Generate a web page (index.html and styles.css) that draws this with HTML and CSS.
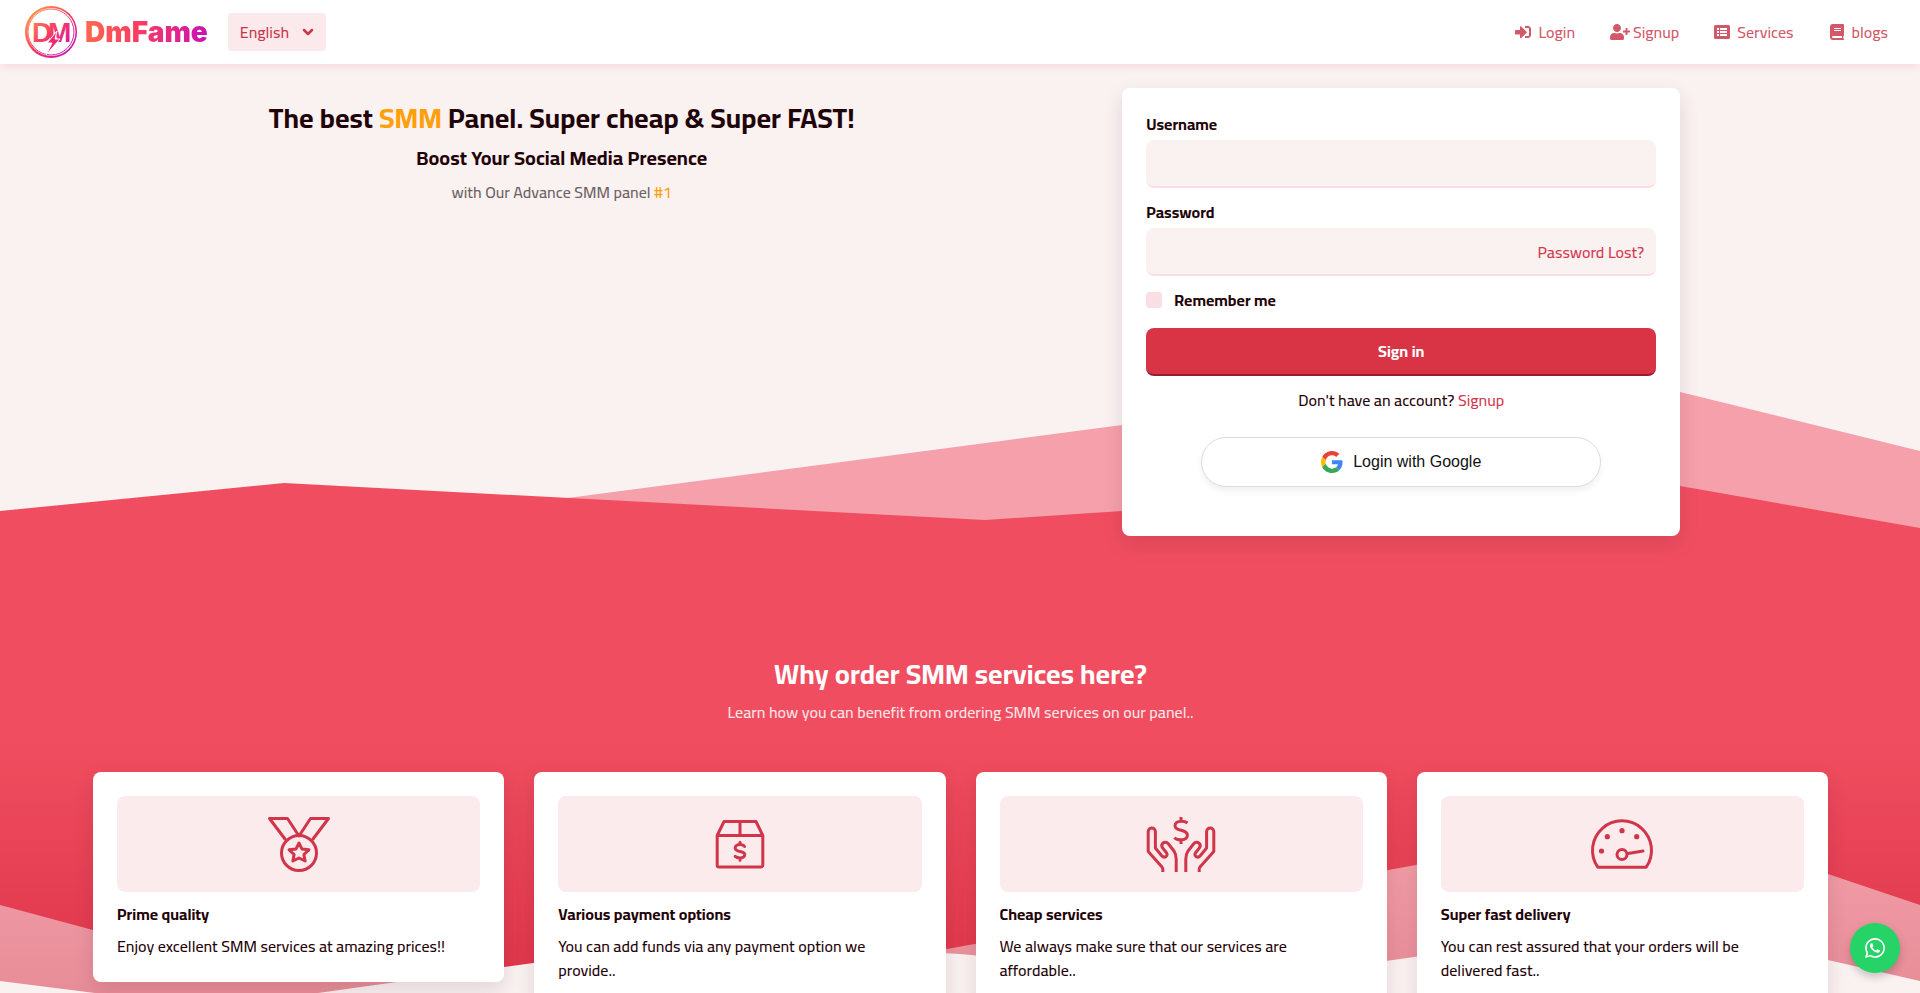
FILE: index.html
```html
<!DOCTYPE html>
<html lang="en">
<head>
    <meta charset="UTF-8">
    <meta name="viewport" content="width=device-width, initial-scale=1.0">
    <title>DmFame</title>
    <link rel="stylesheet" href="styles.css">
</head>
<body>
    <header class="navbar">
        <a class="brand" href="#">
            <svg class="brand-mark" viewBox="0 0 54 54" aria-hidden="true">
                <defs>
                    <linearGradient id="brand-gradient" gradientUnits="userSpaceOnUse" x1="6" y1="6" x2="48" y2="48">
                        <stop offset="0" stop-color="#ff9a4a"/>
                        <stop offset="0.5" stop-color="#fb3a62"/>
                        <stop offset="1" stop-color="#c411b8"/>
                    </linearGradient>
                </defs>
                <path fill="url(#brand-gradient)" fill-rule="evenodd" d="M27 1a26 26 0 1 0 0 52a26 26 0 1 0 0-52zM27.500 3a24 24 0 1 1 0 48a24 24 0 1 1 0-48z"/>
                <circle cx="27" cy="27" r="23" fill="none" stroke="url(#brand-gradient)" stroke-width="1"/>
                <path d="M2 32a25 25 0 0 1 14-28a28 28 0 0 0-14 28zM52 22a25 25 0 0 1-14 28a28 28 0 0 0 14-28z" fill="url(#brand-gradient)"/>
                <text class="brand-initials" y="37" fill="url(#brand-gradient)"><tspan x="8">D</tspan><tspan x="24">M</tspan></text>
                <path d="M33 26L23 38h5l-6 12 14-16h-5z" fill="#ee2c70" stroke="#fff" stroke-width="1"/>
            </svg>
            <span class="brand-name">DmFame</span>
        </a>
        <div class="language">
            <select class="language-select" aria-label="Language">
                <option>English</option>
            </select>
            <svg class="language-arrow" viewBox="0 0 12 12" aria-hidden="true"><path d="M2 4l4 4 4-4"/></svg>
        </div>
        <nav class="menu">
            <a class="menu-link" href="#">
                <svg class="menu-icon" viewBox="0 0 512 512" aria-hidden="true"><path d="M416 448h-84c-6.6 0-12-5.4-12-12v-40c0-6.6 5.4-12 12-12h84c17.7 0 32-14.3 32-32V160c0-17.7-14.3-32-32-32h-84c-6.6 0-12-5.4-12-12V76c0-6.6 5.4-12 12-12h84c53 0 96 43 96 96v192c0 53-43 96-96 96zm-47-201L201 79c-15-15-41-4.500-41 17v96H24c-13.300 0-24 10.700-24 24v96c0 13.300 10.700 24 24 24h136v96c0 21.500 26 32 41 17l168-168c9.300-9.400 9.300-24.600 0-34z"/></svg>
                Login
            </a>
            <a class="menu-link menu-link-tight" href="#">
                <svg class="menu-icon menu-icon-wide" viewBox="0 0 640 512" aria-hidden="true"><path d="M624 208h-64v-64c0-8.800-7.200-16-16-16h-32c-8.800 0-16 7.200-16 16v64h-64c-8.800 0-16 7.200-16 16v32c0 8.800 7.200 16 16 16h64v64c0 8.800 7.200 16 16 16h32c8.800 0 16-7.200 16-16v-64h64c8.800 0 16-7.200 16-16v-32c0-8.800-7.200-16-16-16zm-400 48c70.700 0 128-57.300 128-128S294.700 0 224 0 96 57.300 96 128s57.300 128 128 128zm89.600 32h-16.700c-22.200 10.200-46.900 16-72.900 16s-50.600-5.800-72.900-16h-16.700C60.200 288 0 348.200 0 422.400V464c0 26.500 21.500 48 48 48h352c26.500 0 48-21.500 48-48v-41.600c0-74.200-60.200-134.400-134.400-134.400z"/></svg>
                Signup
            </a>
            <a class="menu-link" href="#">
                <svg class="menu-icon" viewBox="0 0 16 16" aria-hidden="true"><path fill-rule="evenodd" d="M1.500 1h13A1.500 1.500 0 0 1 16 2.500v11a1.500 1.500 0 0 1-1.500 1.500h-13A1.500 1.500 0 0 1 0 13.500v-11A1.500 1.500 0 0 1 1.500 1zM3 4v2h2V4zM6 4v2h7V4zM3 7v2h2V7zM6 7v2h7V7zM3 10v2h2v-2zM6 10v2h7v-2z"/></svg>
                Services
            </a>
            <a class="menu-link" href="#">
                <svg class="menu-icon" viewBox="0 0 16 16" aria-hidden="true"><path fill-rule="evenodd" d="M4 0h10a1 1 0 0 1 1 1v10.500l-.7.800v2l.7.700v1H4a3 3 0 0 1-3-3V3a3 3 0 0 1 3-3zM5 4v1h7V4zM5 6v1h7V6zM4 12a1 1 0 0 0 0 2h9v-2z"/></svg>
                blogs
            </a>
        </nav>
    </header>

    <main class="page">
        <svg class="backdrop" viewBox="0 0 1920 976" preserveAspectRatio="none" aria-hidden="true">
            <defs>
                <linearGradient id="red-fade" gradientUnits="userSpaceOnUse" x1="0" y1="676" x2="0" y2="916">
                    <stop offset="0" stop-color="#f04e60"/>
                    <stop offset="1" stop-color="#df364b"/>
                </linearGradient>
                <linearGradient id="pink-fade" gradientUnits="userSpaceOnUse" x1="0" y1="786" x2="0" y2="936">
                    <stop offset="0" stop-color="#f29da7"/>
                    <stop offset="1" stop-color="#e68c97"/>
                </linearGradient>
            </defs>
            <polygon fill="#f5a0aa" points="560,435 1122,361 1573,302 1680,328 1920,387 1920,500 560,500"/>
            <polygon fill="url(#red-fade)" points="0,447 284,419 985,456 1122,447 1633,414 1680,422 1920,464 1920,976 0,976"/>
            <polygon fill="url(#pink-fade)" points="0,841 93,866 450,916 880,897 1416,801 1640,761 1828,810 1920,841 1920,976 0,976"/>
            <polygon fill="#faf1f1" points="0,917 95,929 200,945 318,929 504,903 700,876 960,890 1250,916 1400,895 1663,858 1828,896 1920,917 1920,976 0,976"/>
        </svg>

        <div class="content">
            <section class="hero">
                <div class="intro">
                    <h1 class="intro-title">The best <span class="accent">SMM</span> Panel. Super cheap &amp; Super FAST!</h1>
                    <h2 class="intro-subtitle">Boost Your Social Media Presence</h2>
                    <p class="intro-text">with Our Advance SMM panel <span class="accent">#1</span></p>
                </div>

                <form class="login-card">
                    <div class="field">
                        <label class="field-label" for="username">Username</label>
                        <input class="field-input" type="text" id="username" name="username">
                    </div>
                    <div class="field">
                        <label class="field-label" for="password">Password</label>
                        <div class="password-box">
                            <input class="field-input" type="password" id="password" name="password">
                            <a class="password-lost" href="#">Password Lost?</a>
                        </div>
                    </div>
                    <div class="remember">
                        <input class="remember-box" type="checkbox" id="remember" name="remember">
                        <label class="field-label" for="remember">Remember me</label>
                    </div>
                    <button class="signin-button" type="submit">Sign in</button>
                    <p class="signup-text">Don't have an account? <a class="signup-link" href="#">Signup</a></p>
                    <button class="google-button" type="button">
                        <svg class="google-icon" viewBox="0 0 48 48" aria-hidden="true">
                            <path fill="#EA4335" d="M24 9.500c3.540 0 6.710 1.220 9.210 3.600l6.850-6.850C35.900 2.380 30.470 0 24 0 14.620 0 6.510 5.380 2.560 13.220l7.980 6.190C12.430 13.720 17.740 9.500 24 9.500z"/>
                            <path fill="#4285F4" d="M46.980 24.550c0-1.570-.15-3.090-.38-4.550H24v9.020h12.940c-.58 2.960-2.260 5.480-4.780 7.180l7.730 6c4.510-4.180 7.090-10.360 7.090-17.650z"/>
                            <path fill="#FBBC05" d="M10.530 28.590c-.48-1.450-.76-2.990-.76-4.590s.27-3.140.76-4.590l-7.980-6.190C.92 16.460 0 20.120 0 24c0 3.880.92 7.540 2.560 10.780l7.970-6.190z"/>
                            <path fill="#34A853" d="M24 48c6.480 0 11.930-2.130 15.890-5.810l-7.730-6c-2.150 1.450-4.920 2.300-8.160 2.300-6.260 0-11.570-4.220-13.470-9.910l-7.980 6.190C6.510 42.620 14.620 48 24 48z"/>
                        </svg>
                        Login with Google
                    </button>
                </form>
            </section>

            <section class="benefits">
                <h2 class="benefits-title">Why order SMM services here?</h2>
                <p class="benefits-text">Learn how you can benefit from ordering SMM services on our panel..</p>

                <div class="benefit-list">
                    <article class="benefit">
                        <div class="benefit-picture">
                            <svg class="benefit-icon" viewBox="0 0 72 64" aria-hidden="true">
                                <path d="M22 27L6.500 6.500H24.500L36 24 47.500 6.500H65.500L50 27"/>
                                <circle cx="36" cy="41" r="17.500"/>
                                <path d="M36 31l2.900 5.900 7 .9-5 4.700 1.200 6.500-6.100-3-6.100 3 1.200-6.500-5-4.700 7-.9z"/>
                            </svg>
                        </div>
                        <h3 class="benefit-title">Prime quality</h3>
                        <p class="benefit-text">Enjoy excellent SMM services at amazing prices!!</p>
                    </article>

                    <article class="benefit">
                        <div class="benefit-picture">
                            <svg class="benefit-icon" viewBox="0 0 72 64" aria-hidden="true">
                                <path d="M13.200 23.500V53a2 2 0 0 0 2 2h41.600a2 2 0 0 0 2-2V23.500L52 9.500H20zM13.200 23.500h45.600M36 9.500v14"/>
                                <path d="M40.500 34.500c-1-1.500-2.500-2-4.500-2-2.800 0-4.800 1.500-4.800 3.400 0 4.800 9.600 2.300 9.600 6.700 0 2-2 3.400-4.800 3.400-2.200 0-3.800-.6-4.800-1.600M36 30.200v2M36 46v2.300"/>
                            </svg>
                        </div>
                        <h3 class="benefit-title">Various payment options</h3>
                        <p class="benefit-text">You can add funds via any payment option we provide..</p>
                    </article>

                    <article class="benefit">
                        <div class="benefit-picture">
                            <svg class="benefit-icon benefit-icon-flat" viewBox="0 0 72 64" aria-hidden="true">
                                <path d="M17.800 60v-2.500q0-1.500-1-2.700L3.200 39.500V19.500a3.600 3.600 0 0 1 7.200 0V36l6.100 7.500c3 3.500 7.400.2 4.800-3l-3.300-4c-3.500-4.500 2-8.500 5.300-4.700L29 39q2.200 3.500 2.200 8v13"/>
                                <path d="M54.200 60v-2.500q0-1.500 1-2.700L68.800 39.500V19.500a3.600 3.600 0 0 0-7.200 0V36l-6.100 7.500c-3 3.500-7.400.2-4.800-3l3.300-4c3.500-4.500-2-8.500-5.300-4.700L43 39q-2.200 3.500-2.200 8v13"/>
                                <path d="M42.500 11c-1.500-1.200-3.500-1.800-6.500-1.800-3.600 0-6 1.900-6 4.500 0 6.200 12.400 3 12.400 9.500 0 2.700-2.400 4.600-6.400 4.600-3 0-5.200-.6-6.700-2.100M36 5v4M36 28v4"/>
                            </svg>
                        </div>
                        <h3 class="benefit-title">Cheap services</h3>
                        <p class="benefit-text">We always make sure that our services are affordable..</p>
                    </article>

                    <article class="benefit">
                        <div class="benefit-picture">
                            <svg class="benefit-icon" viewBox="0 0 72 64" aria-hidden="true">
                                <path d="M11.800 55.200A29.500 29.500 0 1 1 60.200 55.200z"/>
                                <circle cx="36" cy="42.500" r="5"/>
                                <path d="M42 41.500L57 39"/>
                                <g class="dots">
                                    <circle cx="15.500" cy="39" r="2.600"/>
                                    <circle cx="21.300" cy="24.700" r="2.600"/>
                                    <circle cx="36" cy="18.700" r="2.600"/>
                                    <circle cx="50.700" cy="24.700" r="2.600"/>
                                </g>
                            </svg>
                        </div>
                        <h3 class="benefit-title">Super fast delivery</h3>
                        <p class="benefit-text">You can rest assured that your orders will be delivered fast..</p>
                    </article>
                </div>
            </section>
        </div>
    </main>

    <a class="whatsapp" href="#" aria-label="WhatsApp">
        <svg class="whatsapp-icon" viewBox="0 32 448 448" aria-hidden="true"><path d="M380.900 97.100C339 55.100 283.200 32 223.900 32c-122.400 0-222 99.600-222 222 0 39.100 10.200 77.300 29.600 111L0 480l117.700-30.900c32.400 17.700 68.900 27 106.100 27h.1c122.300 0 224.100-99.600 224.100-222 0-59.300-25.200-115-67.100-157zm-157 341.600c-33.200 0-65.700-8.900-94-25.700l-6.700-4-69.800 18.300L72 359.200l-4.400-7c-18.500-29.400-28.200-63.300-28.200-98.200 0-101.700 82.800-184.500 184.600-184.500 49.300 0 95.600 19.200 130.400 54.100 34.800 34.900 56.200 81.200 56.100 130.500 0 101.800-84.900 184.600-186.600 184.600zm101.200-138.200c-5.500-2.800-32.800-16.200-37.900-18-5.100-1.900-8.800-2.800-12.500 2.800-3.700 5.600-14.300 18-17.600 21.800-3.200 3.700-6.500 4.200-12 1.400-32.600-16.300-54-29.100-75.500-66-5.700-9.800 5.700-9.100 16.300-30.300 1.800-3.700.9-6.900-.5-9.700-1.400-2.800-12.500-30.100-17.100-41.200-4.500-10.800-9.100-9.300-12.500-9.500-3.200-.2-6.900-.2-10.600-.2-3.700 0-9.700 1.400-14.800 6.900-5.100 5.600-19.400 19-19.400 46.300 0 27.300 19.900 53.700 22.600 57.400 2.800 3.700 39.100 59.700 94.800 83.800 35.200 15.200 49 16.500 66.600 13.900 10.700-1.600 32.800-13.400 37.400-26.400 4.600-13 4.600-24.100 3.200-26.400-1.300-2.500-5-3.900-10.500-6.600z"/></svg>
    </a>
</body>
</html>
```

FILE: styles.css
```css
* {
    box-sizing: border-box;
}

body {
    margin: 0;
    background: #faf1f1;
    color: #1f0409;
    font-family: Cairo, Roboto, sans-serif;
    font-size: 16px;
    font-weight: 500;
    line-height: 24px;
}

h1, h2, h3, p {
    margin: 0;
}

a {
    text-decoration: none;
}

/* top bar */
.navbar {
    position: relative;
    z-index: 1;
    display: flex;
    align-items: center;
    height: 64px;
    padding: 0 32px 0 24px;
    background: #fff;
    box-shadow: 0 2px 8px rgba(217, 51, 70, 0.12);
}

.brand {
    display: flex;
    align-items: center;
    gap: 7px;
    margin-right: 20px;
}

.brand-mark {
    width: 54px;
    height: 54px;
}

.brand-initials {
    font-family: "Liberation Sans", Arial, sans-serif;
    font-size: 28px;
    font-weight: 700;
}

.brand-name {
    font-family: Inter, sans-serif;
    font-size: 28px;
    font-weight: 900;
    line-height: 40px;
    color: transparent;
    background: linear-gradient(100deg, #ff6a4d, #fb3a62 45%, #c411b8);
    -webkit-background-clip: text;
    background-clip: text;
}

.language {
    position: relative;
}

.language-select {
    appearance: none;
    width: 98px;
    height: 38px;
    padding: 0 12px;
    border: none;
    border-radius: 4px;
    background: #fbe9eb;
    color: #c9364b;
    font: inherit;
}

.language-arrow {
    position: absolute;
    top: 13px;
    right: 12px;
    width: 12px;
    height: 12px;
    fill: none;
    stroke: #c9364b;
    stroke-width: 2.5;
    stroke-linecap: round;
    stroke-linejoin: round;
    pointer-events: none;
}

.menu {
    display: flex;
    gap: 35px;
    margin-left: auto;
}

.menu-link {
    display: flex;
    align-items: center;
    gap: 7px;
    color: #d2586a;
}

.menu-link-tight {
    gap: 3px;
}

.menu-icon {
    width: 16px;
    height: 16px;
    fill: currentColor;
}

.menu-icon-wide {
    width: 20px;
}

/* the waves and the content share one grid cell */
.page {
    display: grid;
    grid-template-columns: 100%;
}

.backdrop {
    grid-area: 1 / 1;
    width: 100%;
    height: 976px;
}

.content {
    grid-area: 1 / 1;
    z-index: 0;
}

/* hero */
.hero {
    display: grid;
    grid-template-columns: 1fr 1fr;
    align-items: start;
    padding: 24px 99px 0 142px;
}

.intro {
    display: grid;
    gap: 8px;
    padding-top: 10px;
    text-align: center;
}

.intro-title {
    font-size: 28px;
    line-height: 40px;
}

.intro-subtitle {
    font-size: 20px;
    line-height: 24px;
}

.intro-text {
    padding-top: 2px;
    color: #6b6164;
}

.accent {
    color: #ff9f0a;
}

.login-card {
    justify-self: center;
    width: 100%;
    max-width: 558px;
    padding: 24px 24px 49px;
    border-radius: 8px;
    background: #fff;
    box-shadow: 0 8px 20px rgba(60, 20, 30, 0.12);
}

.field {
    display: grid;
    gap: 4px;
    margin-bottom: 12px;
}

.field-label {
    font-weight: 700;
}

.field-input {
    width: 100%;
    height: 48px;
    padding: 0 12px;
    border: none;
    border-bottom: 2px solid #f9dfe3;
    border-radius: 8px;
    background: #faf1f1;
    font: inherit;
}

.password-box {
    position: relative;
}

.password-lost {
    position: absolute;
    top: 12px;
    right: 12px;
    color: #d33a50;
}

.remember {
    display: flex;
    align-items: center;
    gap: 12px;
    margin-bottom: 16px;
}

.remember-box {
    appearance: none;
    width: 16px;
    height: 16px;
    margin: 0;
    border-radius: 3px;
    background: #f9dfe3;
}

.signin-button {
    display: block;
    width: 100%;
    height: 48px;
    border: none;
    border-bottom: 2px solid #94202f;
    border-radius: 8px;
    background: #d93346;
    color: #fff;
    font: inherit;
    font-weight: 700;
}

.signup-text {
    margin: 12px 0 25px;
    text-align: center;
}

.signup-link {
    color: #d33a50;
}

.google-button {
    display: flex;
    align-items: center;
    justify-content: center;
    gap: 10px;
    width: 100%;
    max-width: 400px;
    height: 50px;
    margin: 0 auto;
    border: 1px solid #dadce0;
    border-radius: 25px;
    background: #fff;
    box-shadow: 0 4px 6px rgba(0, 0, 0, 0.06);
    color: #111;
    font-family: "Liberation Sans", Arial, sans-serif;
    font-size: 16px;
}

.google-icon {
    width: 22px;
    height: 22px;
}

/* benefits */
.benefits {
    padding: 118px 92px 32px 93px;
    text-align: center;
}

.benefits-title {
    margin-bottom: 6px;
    color: #fff;
    font-size: 28px;
    line-height: 40px;
}

.benefits-text {
    color: #fde6e9;
}

.benefit-list {
    display: grid;
    grid-template-columns: repeat(4, 1fr);
    align-items: start;
    gap: 30px;
    margin-top: 48px;
    text-align: left;
}

.benefit {
    padding: 24px;
    border-radius: 8px;
    background: #fff;
    box-shadow: 0 8px 20px rgba(60, 20, 30, 0.12);
}

.benefit-picture {
    display: flex;
    align-items: center;
    justify-content: center;
    height: 96px;
    margin-bottom: 10px;
    border-radius: 8px;
    background: #fbebed;
}

.benefit-icon {
    width: 72px;
    height: 64px;
    fill: none;
    stroke: #d0354a;
    stroke-width: 3;
    stroke-linecap: round;
    stroke-linejoin: round;
}

.benefit-icon-flat {
    stroke-linecap: butt;
}

.dots {
    fill: #d0354a;
    stroke: none;
}

.benefit-title {
    margin-bottom: 8px;
    font-size: 16px;
    line-height: 24px;
}

/* chat button */
.whatsapp {
    position: fixed;
    right: 20px;
    bottom: 20px;
    display: flex;
    align-items: center;
    justify-content: center;
    width: 50px;
    height: 50px;
    border-radius: 50%;
    background: #25d366;
    box-shadow: 0 4px 8px rgba(0, 0, 0, 0.2);
}

.whatsapp-icon {
    width: 20px;
    height: 20px;
    fill: #fff;
}
```
